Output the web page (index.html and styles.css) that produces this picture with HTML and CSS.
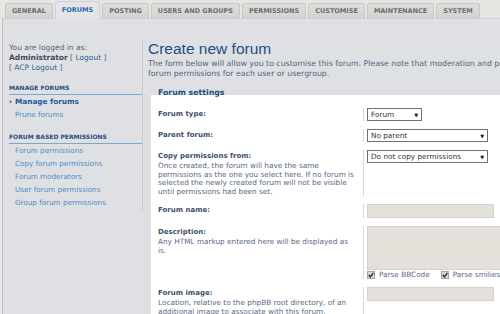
FILE: index.html
```html
<!DOCTYPE html>
<html>
  <head>
    <link rel="stylesheet" href="styles.css">
  </head>
  <body>
    <div class="page">
      <ul class="tabs">
        <li><a href="#">General</a></li>
        <li class="active"><a href="#">Forums</a></li>
        <li><a href="#">Posting</a></li>
        <li><a href="#">Users and groups</a></li>
        <li><a href="#">Permissions</a></li>
        <li><a href="#">Customise</a></li>
        <li><a href="#">Maintenance</a></li>
        <li><a href="#">System</a></li>
      </ul>
      <div class="panel">
        <div class="menu">
          <div class="user">
            You are logged in as:<br>
            <strong>Administrator</strong> [ <a href="#">Logout</a> ]<br>
            [ <a href="#">ACP Logout</a> ]
          </div>
          <div class="menu-block">
            <span class="header">Manage forums</span>
            <ul>
              <li class="active"><a href="#">Manage forums</a></li>
              <li><a href="#">Prune forums</a></li>
            </ul>
          </div>
          <div class="menu-block">
            <span class="header">Forum based permissions</span>
            <ul>
              <li><a href="#">Forum permissions</a></li>
              <li><a href="#">Copy forum permissions</a></li>
              <li><a href="#">Forum moderators</a></li>
              <li><a href="#">User forum permissions</a></li>
              <li><a href="#">Group forum permissions</a></li>
            </ul>
          </div>
        </div>
        <div class="main">
          <h1>Create new forum</h1>
          <p class="intro">The form below will allow you to customise this forum. Please note that moderation and post count settings are set via<br>forum permissions for each user or usergroup.</p>
          <fieldset>
            <legend>Forum settings</legend>
            <dl>
              <dt><label>Forum type:</label></dt>
              <dd><div class="select narrow"><span>Forum</span><span class="arrow">&#9660;</span></div></dd>
            </dl>
            <dl>
              <dt><label>Parent forum:</label></dt>
              <dd><div class="select"><span>No parent</span><span class="arrow">&#9660;</span></div></dd>
            </dl>
            <dl>
              <dt><label>Copy permissions from:</label><span class="explain">Once created, the forum will have the same permissions as the one you select here. If no forum is selected the newly created forum will not be visible until permissions had been set.</span></dt>
              <dd><div class="select"><span>Do not copy permissions</span><span class="arrow">&#9660;</span></div></dd>
            </dl>
            <dl>
              <dt><label>Forum name:</label></dt>
              <dd><div class="input"></div></dd>
            </dl>
            <dl>
              <dt><label>Description:</label><span class="explain short">Any HTML markup entered here will be displayed as is.</span></dt>
              <dd>
                <div class="textarea"></div>
                <div class="checks">
                  <span class="check"><svg width="8" height="8" viewBox="0 0 8 8"><rect x="0.5" y="0.5" width="7" height="7" fill="#d6d6d6" stroke="#a5a5a5"/><path d="M1.8 4 L3.4 5.8 L6.4 1.8" fill="none" stroke="#2d2d2d" stroke-width="1.4"/></svg>Parse BBCode</span>
                  <span class="check"><svg width="8" height="8" viewBox="0 0 8 8"><rect x="0.5" y="0.5" width="7" height="7" fill="#d6d6d6" stroke="#a5a5a5"/><path d="M1.8 4 L3.4 5.8 L6.4 1.8" fill="none" stroke="#2d2d2d" stroke-width="1.4"/></svg>Parse smilies</span>
                </div>
              </dd>
            </dl>
            <dl>
              <dt><label>Forum image:</label><span class="explain">Location, relative to the phpBB root directory, of an additional image to associate with this forum.</span></dt>
              <dd><div class="input"></div></dd>
            </dl>
          </fieldset>
        </div>
      </div>
    </div>
  </body>
</html>
```

FILE: styles.css
```css
html,
body {
  margin: 0;
  overflow: hidden;
  background-color: #e6e6e3;
}

.page {
  width: 640px;
  padding-left: 2px;
  font-family: 'DejaVu Sans', Verdana, sans-serif;
  color: #536482;
}

a {
  text-decoration: none;
}

/* tabs */
.tabs {
  list-style: none;
  margin: 0;
  padding: 1px 0 0 3px;
  display: flex;
  align-items: flex-end;
  gap: 2px;
  height: 18px;
  box-sizing: border-box;
}

.tabs li {
  height: 15px;
  box-sizing: border-box;
  border: 1px solid #c6c7c3;
  border-bottom: none;
  border-radius: 3px 3px 0 0;
  background: linear-gradient(#dedfdc, #d3d4d1);
}

.tabs a {
  display: block;
  padding: 0 6px;
  font-size: 6.5px;
  line-height: 14px;
  font-weight: bold;
  text-transform: uppercase;
  color: #6a6c70;
}

.tabs li.active {
  height: 18px;
  background: #e4e5e8;
  border-color: #cfd0d3;
  margin-bottom: -1px;
  position: relative;
}

.tabs li.active a {
  color: #2c6ab0;
  line-height: 17px;
}

/* panel */
.panel {
  display: flex;
  align-items: flex-start;
  border-top: 1px solid #cfd0d3;
  border-left: 1px solid #bfc1c4;
  background-color: #dfe0e3;
  padding-top: 20px;
  min-height: 300px;
}

.menu {
  width: 140px;
  flex: none;
  border-right: 1px solid #c8cace;
  padding: 4px 0 2px 6px;
  box-sizing: border-box;
}

.user {
  font-size: 7.5px;
  line-height: 10px;
  color: #536482;
}

.user strong {
  color: #3f4a5a;
}

.user a {
  color: #2b5f95;
}

.menu-block {
  margin-top: 10px;
}

.menu-block + .menu-block {
  margin-top: 11px;
}

.header {
  display: block;
  font-size: 6px;
  line-height: 9px;
  font-weight: bold;
  text-transform: uppercase;
  color: #1f4c82;
  padding-bottom: 2px;
  border-bottom: 1px solid #7ba6cf;
}

.menu-block ul {
  list-style: none;
  margin: 0;
  padding: 0;
}

.menu-block li {
  padding-left: 6px;
  font-size: 7.2px;
  line-height: 13px;
}

.menu-block li a {
  color: #4c8cc8;
}

.menu-block li.active a {
  font-size: 7.3px;
  font-weight: bold;
  color: #1d5a9a;
}

.menu-block li.active::before {
  content: '\203A';
  display: inline-block;
  width: 6px;
  margin-left: -6px;
  font-weight: bold;
  color: #333;
}

/* main */
.main {
  flex: 1;
  padding-left: 5px;
}

h1 {
  margin: 0;
  font-family: 'Liberation Sans', Arial, sans-serif;
  font-weight: normal;
  font-size: 15.5px;
  line-height: 20px;
  color: #1d4f85;
}

.intro {
  margin: 0;
  font-size: 7.8px;
  line-height: 10px;
  white-space: nowrap;
}

fieldset {
  margin: 9px 0 0 3px;
  padding: 2px 0 8px;
  border: none;
  background-color: #ffffff;
}

legend {
  margin-left: 7px;
  padding: 0 0 4px;
  font-size: 7.8px;
  line-height: 10px;
  font-weight: bold;
  color: #1d4f85;
}

dl {
  display: flex;
  margin: 0;
  padding: 4px 0;
}

dt {
  width: 212px;
  flex: none;
  padding: 0 3px 0 7px;
  box-sizing: border-box;
}

dt label {
  display: block;
  font-size: 7px;
  line-height: 12px;
  font-weight: bold;
  color: #425067;
}

.explain {
  display: block;
  font-size: 7.3px;
  line-height: 8.6px;
  color: #5a6882;
}

.explain.short {
  padding-right: 12px;
}

dd {
  margin: 0;
  padding-left: 3px;
  border-left: 1px solid #d9d9d9;
}

.select {
  display: flex;
  justify-content: space-between;
  align-items: center;
  width: 121px;
  height: 13px;
  box-sizing: border-box;
  border: 1px solid #707070;
  padding: 0 3px;
  font-size: 7.3px;
  color: #333;
  background-color: #ffffff;
}

.select.narrow {
  width: 55px;
}

.select .arrow {
  font-size: 5px;
  color: #111;
}

.input {
  width: 127px;
  height: 14px;
  box-sizing: border-box;
  border: 1px solid #d6d3cd;
  background-color: #e4e1db;
}

.textarea {
  width: 160px;
  height: 44px;
  box-sizing: border-box;
  border: 1px solid #d6d3cd;
  background-color: #e4e1db;
}

.checks {
  display: flex;
  gap: 11px;
  margin-top: 0;
  font-size: 7.3px;
  line-height: 9px;
  color: #5a6882;
}

.check {
  display: flex;
  align-items: center;
  gap: 4px;
}
```
